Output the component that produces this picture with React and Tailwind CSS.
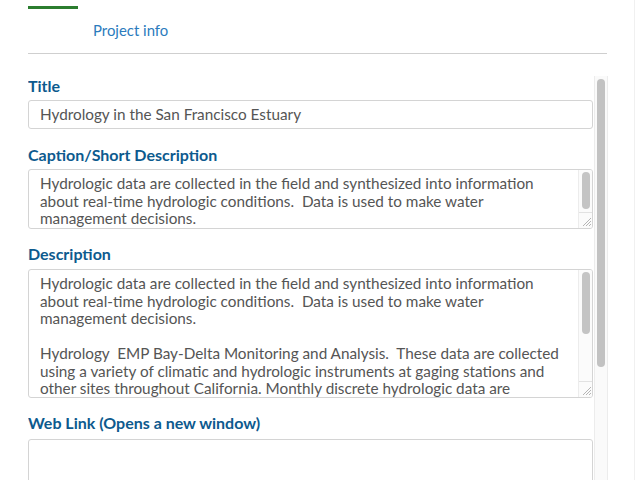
const captionLines = [
  'Hydrologic data are collected in the field and synthesized into information',
  'about real-time hydrologic conditions.  Data is used to make water',
  'management decisions.',
];

const descriptionLines = [
  'Hydrologic data are collected in the field and synthesized into information',
  'about real-time hydrologic conditions.  Data is used to make water',
  'management decisions.',
  '',
  'Hydrology  EMP Bay-Delta Monitoring and Analysis.  These data are collected',
  'using a variety of climatic and hydrologic instruments at gaging stations and',
  'other sites throughout California. Monthly discrete hydrologic data are',
];

const Label = ({ children, className = '' }) => (
  <div className={`shrink-0 text-[16px] leading-[18px] font-bold text-[#0d5a8e] ${className}`}>{children}</div>
);

const ResizeGrip = () => (
  <svg width="13" height="13" viewBox="0 0 13 13" className="block">
    <path d="M12 4 L4 12 M12 7 L7 12 M12 10 L10 12" stroke="#b5b5b5" strokeWidth="1" />
  </svg>
);

const TextBox = ({ lines, height, thumb }) => (
  <div
    className="shrink-0 flex border border-[#d4d4d4] rounded-[3px] overflow-hidden bg-white"
    style={{ height }}
  >
    <div className="flex-1 pl-[11px] pt-[5px] overflow-hidden text-[15.3px] leading-[17.5px] text-[#555]">
      {lines.map((l, i) => (
        <div key={i} className="whitespace-pre h-[17.5px]">{l}</div>
      ))}
    </div>
    <div className="w-[14px] flex flex-col border-l border-[#ececec] bg-[#fbfbfb]">
      <div className="flex justify-center pt-[2px]">
        <div className="w-[8px] rounded-full bg-[#c4c4c4]" style={{ height: thumb }} />
      </div>
      <div className="flex-1" />
      <div className="h-[16px] border-t border-[#e2e2e2] flex items-end justify-end pb-px">
        <ResizeGrip />
      </div>
    </div>
  </div>
);

export default function App() {
  return (
    <div
      className="w-[640px] h-[480px] overflow-hidden bg-white flex"
      style={{ fontFamily: 'Lato, "Noto Sans", sans-serif' }}
    >
      <div className="w-[635px] flex flex-col border-r border-[#f0f0f0]">
        <div className="pl-[28px] shrink-0">
          <div className="w-[50px] h-[3px] bg-[#2b7d2f] mt-[6px]" />
          <div className="ml-[65px] mt-[11px] text-[14.9px] leading-[20px] text-[#2b7bbd]">Project info</div>
          <div className="w-[579px] h-px bg-[#cfcfcf] mt-[13px]" />
        </div>

        <div className="flex flex-1 mt-[22px] pl-[28px] min-h-0">
          <div className="w-[565px] flex flex-col overflow-hidden">
            <Label className="mt-px">Title</Label>
            <div className="shrink-0 mt-[5px] h-[29px] border border-[#d4d4d4] rounded-[3px] pl-[11px] flex items-center text-[15.3px] text-[#555]">
              Hydrology in the San Francisco Estuary
            </div>

            <Label className="mt-[17px]">Caption/Short Description</Label>
            <div className="shrink-0 mt-[5px]">
              <TextBox lines={captionLines} height={60} thumb={37} />
            </div>

            <Label className="mt-[16px]">Description</Label>
            <div className="shrink-0 mt-[6px]">
              <TextBox lines={descriptionLines} height={129} thumb={62} />
            </div>

            <Label className="mt-[16px]">Web Link (Opens a new window)</Label>
            <div className="mt-[7px] h-[60px] border border-[#d4d4d4] rounded-[3px] shrink-0" />
          </div>

          <div className="w-[14px] ml-px border-x border-[#ececec] bg-[#fafafa] flex justify-center">
            <div className="w-[8px] h-[288px] mt-[3px] rounded-full bg-[#c2c2c2]" />
          </div>
        </div>
      </div>
    </div>
  );
}
